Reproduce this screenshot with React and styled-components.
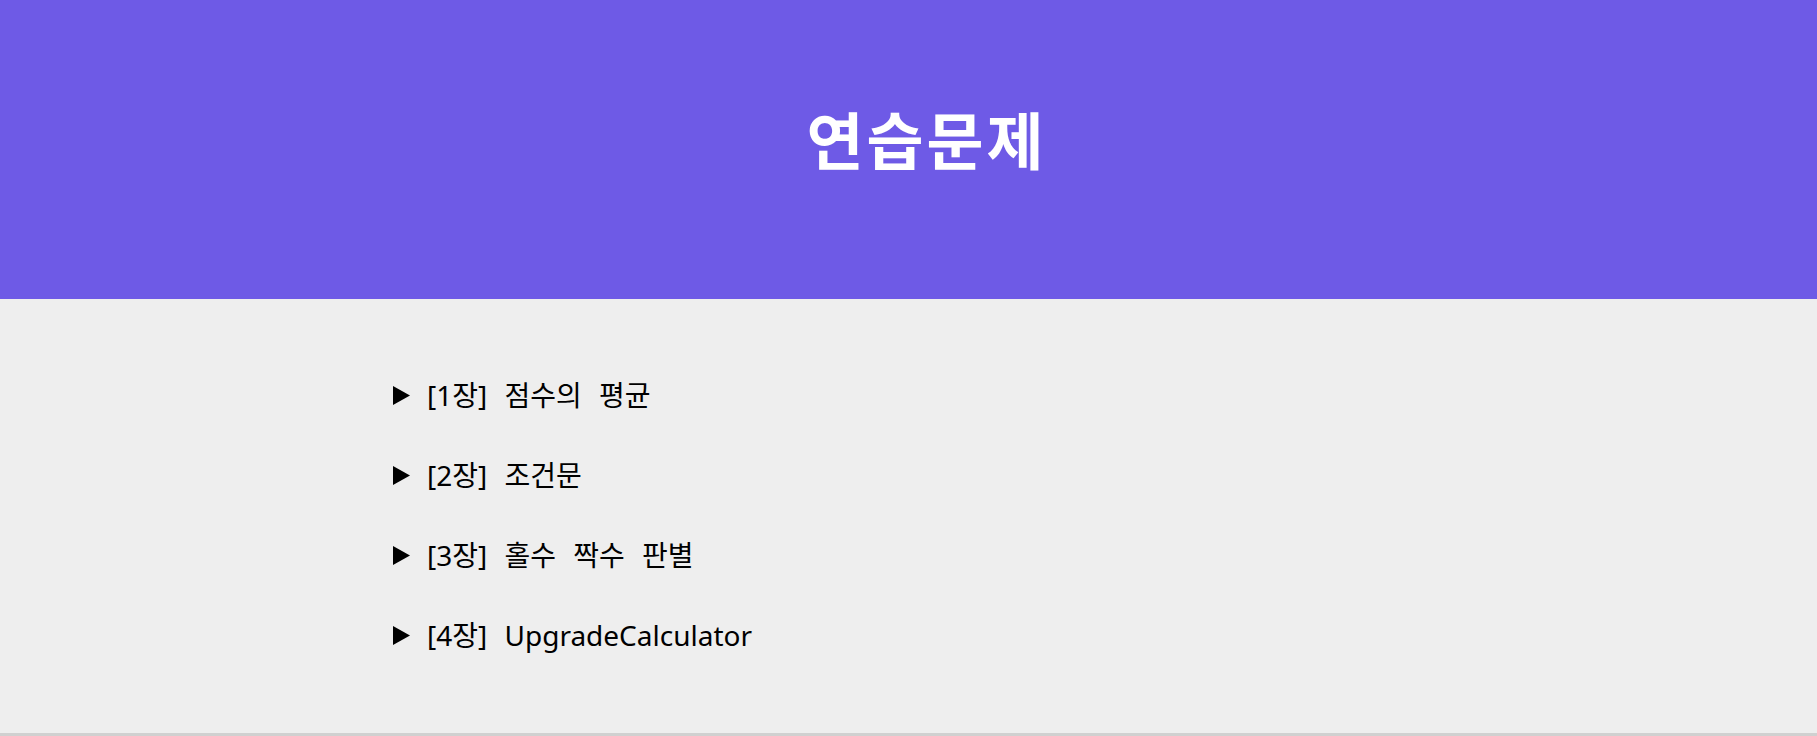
import styled, { createGlobalStyle } from "styled-components";

const Global = createGlobalStyle`
  body {
    margin: 0;
    background: #eeeeee;
    font-family: "Noto Sans", "Noto Sans CJK KR", sans-serif;
    color: #000;
  }
`;

const Header = styled.header`
  box-sizing: border-box;
  height: 299px;
  padding: 101px 0 0 36px;
  background: #6e5ae6;
  text-align: center;
`;

const Title = styled.h1`
  margin: 0;
  font-family: "Noto Sans CJK KR", sans-serif;
  font-size: 62px;
  line-height: 74px;
  letter-spacing: 3px;
  font-weight: 700;
  color: #fff;
`;

const Main = styled.main`
  box-sizing: border-box;
  height: 437px;
  padding-top: 78px;
  border-bottom: 3px solid #d0d0d0;
`;

const List = styled.div`
  width: 1031px;
  margin: 0 auto;
  display: flex;
  flex-direction: column;
  gap: 44px;
`;

const Item = styled.details`
  font-size: 28px;
  line-height: 36px;
  word-spacing: 10px;
`;

const Summary = styled.summary`
  list-style: none;
  display: flex;
  align-items: center;
  gap: 17px;
  cursor: pointer;
  &::-webkit-details-marker {
    display: none;
  }
`;

const Arrow = styled.svg`
  width: 17px;
  height: 19px;
  flex: none;
`;

const chapters = [
  "[1장] 점수의 평균",
  "[2장] 조건문",
  "[3장] 홀수 짝수 판별",
  "[4장] UpgradeCalculator",
];

export default function App() {
  return (
    <>
      <Global />
      <Header>
        <Title>연습문제</Title>
      </Header>
      <Main>
        <List>
          {chapters.map((c) => (
            <Item key={c}>
              <Summary>
                <Arrow viewBox="0 0 17 19">
                  <polygon points="0,0 17,9.5 0,19" fill="#000" />
                </Arrow>
                <span>{c}</span>
              </Summary>
            </Item>
          ))}
        </List>
      </Main>
    </>
  );
}
